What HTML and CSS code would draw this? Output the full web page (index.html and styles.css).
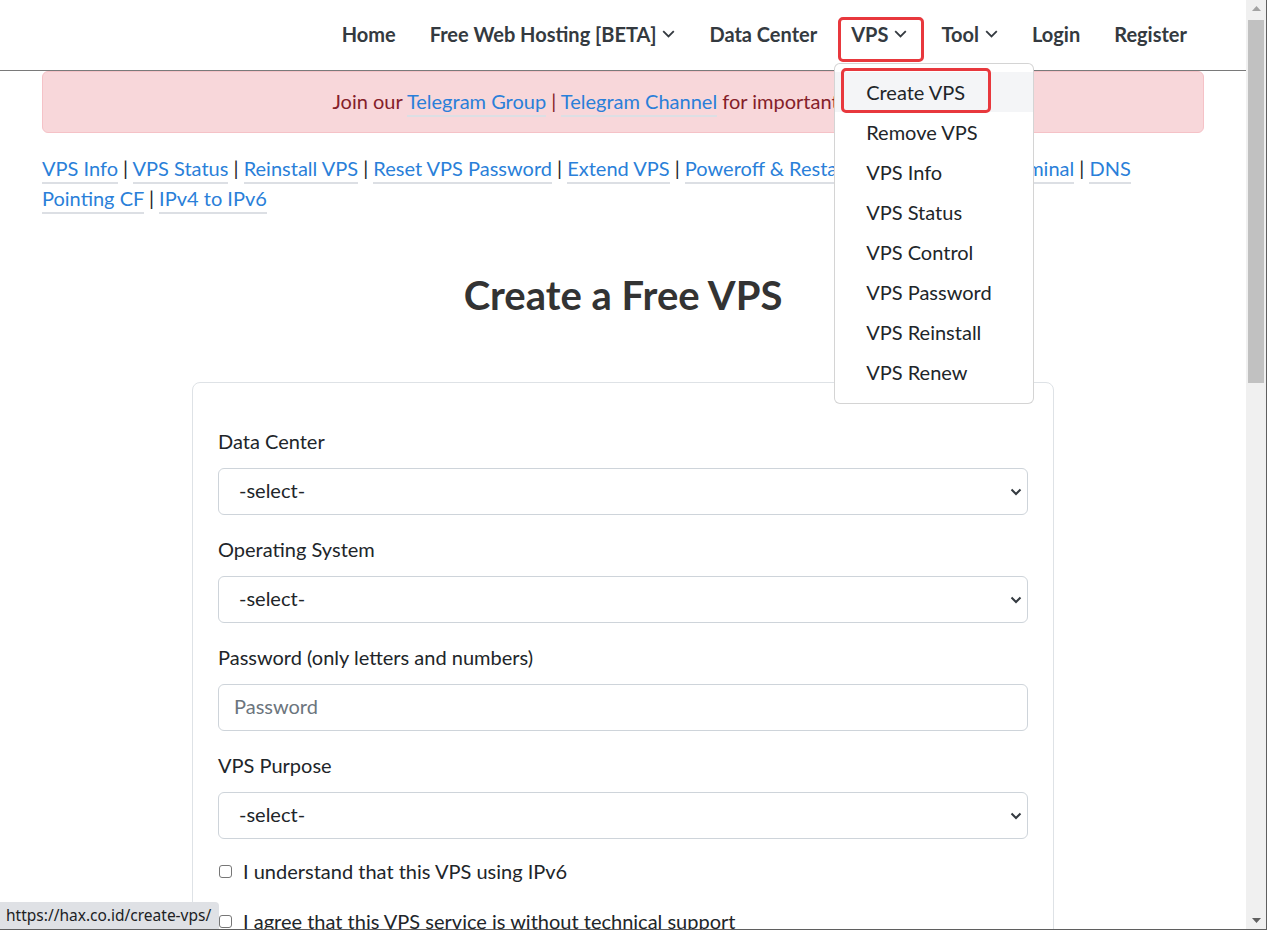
FILE: index.html
```html
<!DOCTYPE html>
<html lang="en">
<head>
  <meta charset="UTF-8">
  <title>Create a Free VPS</title>
  <link rel="stylesheet" href="styles.css">
</head>
<body>

<div class="window">
  <div class="page">

    <header class="topbar">
      <div class="container">
        <ul class="nav">
          <li class="nav-item"><a class="nav-link" href="#">Home</a></li>
          <li class="nav-item">
            <a class="nav-link" href="#">Free Web Hosting [BETA]
              <svg class="chev" width="13" height="8" viewBox="0 0 13 8"><path d="M1.2 1.2l5.3 5.3 5.3-5.3" fill="none" stroke="#343a40" stroke-width="1.8"/></svg>
            </a>
          </li>
          <li class="nav-item"><a class="nav-link" href="#">Data Center</a></li>
          <li class="nav-item">
            <a class="nav-link" href="#">VPS
              <svg class="chev" width="13" height="8" viewBox="0 0 13 8"><path d="M1.2 1.2l5.3 5.3 5.3-5.3" fill="none" stroke="#343a40" stroke-width="1.8"/></svg>
            </a>
            <span class="mark mark-nav"></span>
            <ul class="dropdown-menu">
              <li><a class="dropdown-item active" href="#">Create VPS<span class="mark mark-item"></span></a></li>
              <li><a class="dropdown-item" href="#">Remove VPS</a></li>
              <li><a class="dropdown-item" href="#">VPS Info</a></li>
              <li><a class="dropdown-item" href="#">VPS Status</a></li>
              <li><a class="dropdown-item" href="#">VPS Control</a></li>
              <li><a class="dropdown-item" href="#">VPS Password</a></li>
              <li><a class="dropdown-item" href="#">VPS Reinstall</a></li>
              <li><a class="dropdown-item" href="#">VPS Renew</a></li>
            </ul>
          </li>
          <li class="nav-item">
            <a class="nav-link" href="#">Tool
              <svg class="chev" width="13" height="8" viewBox="0 0 13 8"><path d="M1.2 1.2l5.3 5.3 5.3-5.3" fill="none" stroke="#343a40" stroke-width="1.8"/></svg>
            </a>
          </li>
          <li class="nav-item"><a class="nav-link" href="#">Login</a></li>
          <li class="nav-item"><a class="nav-link" href="#">Register</a></li>
        </ul>
      </div>
    </header>

    <main class="container">
      <div class="alert">
        Join our <a href="#">Telegram Group</a> | <a href="#">Telegram Channel</a> for important updates
      </div>

      <p class="quick-links">
        <a href="#">VPS Info</a> | <a href="#">VPS Status</a> | <a href="#">Reinstall VPS</a> | <a href="#">Reset VPS Password</a> | <a href="#">Extend VPS</a> | <a href="#">Poweroff &amp; Restart VPS</a> | <a href="#">Web VNC Terminal</a> | <a href="#">DNS Pointing CF</a> | <a href="#">IPv4 to IPv6</a>
      </p>

      <h2 class="page-title">Create a Free VPS</h2>

      <form class="card">
        <div class="field">
          <label for="dc">Data Center</label>
          <select id="dc" class="form-select"><option>-select-</option></select>
        </div>
        <div class="field">
          <label for="os">Operating System</label>
          <select id="os" class="form-select"><option>-select-</option></select>
        </div>
        <div class="field">
          <label for="pw">Password (only letters and numbers)</label>
          <input id="pw" class="form-control" type="text" placeholder="Password">
        </div>
        <div class="field">
          <label for="purpose">VPS Purpose</label>
          <select id="purpose" class="form-select"><option>-select-</option></select>
        </div>
        <div class="check">
          <input type="checkbox" id="c1"><label for="c1">I understand that this VPS using IPv6</label>
        </div>
        <div class="check">
          <input type="checkbox" id="c2"><label for="c2">I agree that this VPS service is without technical support</label>
        </div>
      </form>
    </main>

    <div class="statusbar">https://hax.co.id/create-vps/</div>
  </div>

  <div class="scrollbar">
    <div class="sb-arrow"><svg width="9" height="5" viewBox="0 0 9 5"><path d="M0 5L4.5 0 9 5z" fill="#a3a3a3"/></svg></div>
    <div class="sb-thumb"></div>
    <div class="sb-space"></div>
    <div class="sb-arrow"><svg width="9" height="5" viewBox="0 0 9 5"><path d="M0 0L4.5 5 9 0z" fill="#606060"/></svg></div>
  </div>
</div>

</body>
</html>
```

FILE: styles.css
```css
html, body { margin: 0; padding: 0; height: 930px; overflow: hidden; }
body { font-family: Lato, "Liberation Sans", sans-serif; font-size: 20px; line-height: 30px; color: #212529; background: #fff; }
a { color: #2a7fd9; text-decoration: none; }

.window { display: flex; height: 930px; box-sizing: border-box; border-right: 1px solid #5f5f5f; border-bottom: 1px solid #5f5f5f; }
.page { flex: 1; min-width: 0; position: relative; overflow: hidden; }
.container { width: 1162px; margin: 0 auto; }

/* top nav */
.topbar { height: 70px; border-bottom: 1px solid #7a7a7a; background: #fff; }
.topbar .container { height: 100%; }
.nav { display: flex; justify-content: flex-end; height: 100%; margin: 0; padding: 0; list-style: none; }
.nav-item { position: relative; display: flex; align-items: center; }
.nav-link { display: flex; align-items: center; gap: 6px; padding: 0 17px; margin-top: -3px; font-weight: 700; color: #343a40; }
.chev { margin-top: 1px; }

.mark { position: absolute; box-sizing: border-box; border: 3px solid #e8383d; border-radius: 5px; pointer-events: none; }
.mark-nav { left: 4px; top: 17px; width: 86px; height: 45px; }
.mark-item { left: 6px; top: -4px; width: 150px; height: 45px; }

.dropdown-menu { position: absolute; top: 63px; left: 0; width: 200px; box-sizing: border-box; margin: 0; padding: 8px 0 11px; list-style: none; background: #fff; border: 1px solid rgba(0, 0, 0, .17); border-radius: 6px; z-index: 5; }
.dropdown-item { position: relative; display: block; padding: 5px 31px; color: #212529; }
.dropdown-item.active { background: #f4f5f7; }

/* alert + links */
.alert { padding: 14px 20px 16px; text-align: center; color: #842029; background: #f8d7da; border: 1px solid #f5c2c7; border-radius: 6px; }
.alert a, .quick-links a { border-bottom: 2px solid #dcdfe4; padding-bottom: 2px; }
.quick-links { margin: 20px 0 0; }

.page-title { margin: 58px 0 63px; text-align: center; font-size: 40px; line-height: 48px; font-weight: 700; color: #333; }

/* form card */
.card { width: 862px; box-sizing: border-box; margin: 0 auto; padding: 43px 25px 40px; border: 1px solid #dee2e6; border-radius: 8px; }
.field { margin-bottom: 19px; }
.field:nth-child(4) { margin-bottom: 17px; }
.field label { display: block; margin-bottom: 12px; }
.form-select, .form-control { display: block; width: 100%; box-sizing: border-box; height: 47px; margin: 0; font-family: inherit; font-size: 20px; line-height: 30px; color: #212529; background-color: #fff; border: 1px solid #ced4da; border-radius: 6px; }
.form-select { appearance: none; -webkit-appearance: none; padding: 5px 36px 9px 20px; background-image: url("data:image/svg+xml,%3csvg xmlns='http://www.w3.org/2000/svg' viewBox='0 0 12 8'%3e%3cpath fill='none' stroke='%23343a40' stroke-width='2' d='M1.5 1.5l4.5 4.5 4.5-4.5'/%3e%3c/svg%3e"); background-repeat: no-repeat; background-position: right 5px center; background-size: 12px 8px; }
.form-control { padding: 5px 15px 9px; outline: none; }
.form-control::placeholder { color: #6c757d; }

.check { display: flex; align-items: center; margin-bottom: 20px; }
.check input { appearance: none; -webkit-appearance: none; width: 13px; height: 13px; margin: 0 11px 0 1px; border: 1px solid #767676; border-radius: 3px; background: #fff; }

/* browser chrome bits */
.statusbar { position: absolute; left: 0; bottom: 0; height: 27px; padding: 0 8px 0 6px; font-family: "Noto Sans", "Open Sans", sans-serif; font-size: 15.5px; line-height: 27px; color: #202124; background: #dfe1e5; border-top-right-radius: 4px; }

.scrollbar { width: 20px; display: flex; flex-direction: column; align-items: center; background: #f0f0f0; }
.sb-arrow { height: 17px; display: flex; align-items: center; justify-content: center; }
.sb-thumb { width: 16px; height: 363px; margin-top: 3px; background: #c1c1c1; }
.sb-space { flex: 1; }
```
